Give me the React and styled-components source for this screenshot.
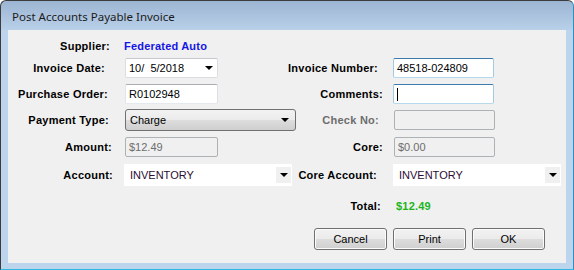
import React from 'react';
import styled, { createGlobalStyle } from 'styled-components';

const Global = createGlobalStyle`
    html, body {
        margin: 0;
        padding: 0;
        background: #ffffff;
    }
    * {
        box-sizing: border-box;
    }
`;

const Window = styled.div`
    width: 574px;
    height: 270px;
    border: 1px solid #3c3c3c;
    border-right-color: #2a8fc4;
    border-bottom-color: #2fb8de;
    border-radius: 6px 6px 0 0;
    background: linear-gradient(to bottom, #9cb5d2 0px, #b9d0e9 29px, #bcd4ec 29px, #bcd4ec 100%);
    display: flex;
    flex-direction: column;
    padding: 0 7px 6px 7px;
    overflow: hidden;
`;

const TitleBar = styled.div`
    height: 29px;
    display: flex;
    align-items: center;
    padding: 2px 0 0 4px;
    font-family: "Noto Sans", "Open Sans", sans-serif;
    font-size: 11.5px;
    color: #1b1b1b;
`;

const Client = styled.div`
    flex: 1;
    background: #f0f0f0;
    padding-top: 5px;
    font-family: "Liberation Sans", Arial, sans-serif;
    font-size: 11px;
    color: #000000;
`;

// label | field | label | field
const Form = styled.div`
    display: grid;
    grid-template-columns: 116px 164px 105px 168px;
    grid-template-rows: 21px 24px 28px 23px 31px 25px 38px;
    align-items: center;
`;

const Label = styled.div`
    text-align: right;
    font-weight: 700;
    letter-spacing: 0.25px;
    padding-right: ${p => p.$pad}px;
    color: ${p => (p.$disabled ? '#6d6d6d' : '#000000')};
    white-space: nowrap;
`;

const SupplierName = styled.div`
    font-weight: 700;
    letter-spacing: 0.2px;
    color: #1515e6;
    white-space: nowrap;
`;

const TotalValue = styled.div`
    font-weight: 700;
    letter-spacing: 0.2px;
    color: #1db51d;
    padding-left: 3px;
`;

const TextBox = styled.div`
    width: ${p => p.$w}px;
    height: 20px;
    margin-left: ${p => p.$ml || 0}px;
    display: flex;
    align-items: center;
    padding-left: 3px;
    background: ${p => (p.$disabled ? '#f0f0f0' : '#ffffff')};
    color: ${p => (p.$disabled ? '#6d6d6d' : '#000000')};
    border: 1px solid;
    border-radius: 2px;
    border-color: ${p =>
        p.$disabled
            ? '#adb2b5'
            : p.$focus
            ? '#3d7bad #a4c9e3 #b7d9ed #a4c9e3'
            : '#abadb3 #dbdfe6 #e3e9ef #e2e3ea'};
`;

const Caret = styled.span`
    width: 1px;
    height: 13px;
    background: #000000;
`;

const Arrow = styled.span`
    width: 0;
    height: 0;
    border-left: 4px solid transparent;
    border-right: 4px solid transparent;
    border-top: 4px solid #000000;
`;

const DatePicker = styled(TextBox)`
    justify-content: space-between;
    padding-right: 4px;
    border-color: #c5c7cc #dcdde0 #dcdde0 #dcdde0;
`;

const DropList = styled.div`
    width: ${p => p.$w}px;
    height: 22px;
    margin-left: 1px;
    display: flex;
    align-items: center;
    justify-content: space-between;
    padding: 0 6px 0 4px;
    border: 1px solid #707070;
    border-radius: 3px;
    background: linear-gradient(to bottom, #f2f2f2 0%, #ebebeb 50%, #dddddd 50%, #cfcfcf 100%);
`;

const FlatCombo = styled.div`
    width: ${p => p.$w}px;
    height: 22px;
    display: flex;
    align-items: center;
    justify-content: space-between;
    padding: 0 1px 0 6px;
    background: #ffffff;
    color: #2c0c34;
`;

const ComboButton = styled.span`
    width: 15px;
    height: 16px;
    display: flex;
    align-items: center;
    justify-content: center;
    background: #f0f0f0;
`;

const ButtonRow = styled.div`
    display: flex;
    justify-content: flex-end;
    gap: 6px;
    margin-top: 3px;
    padding-right: 21px;
`;

const Button = styled.button`
    width: 73px;
    height: 22px;
    padding: 0;
    font-family: "Liberation Sans", Arial, sans-serif;
    font-size: 11px;
    color: #000000;
    border: 1px solid #707070;
    border-radius: 3px;
    background: linear-gradient(to bottom, #f2f2f2 0%, #ebebeb 50%, #dddddd 50%, #cfcfcf 100%);
    box-shadow: inset 0 0 0 1px #fcfcfc;
`;

const App = () => (
    <Window>
        <Global />
        <TitleBar>Post Accounts Payable Invoice</TitleBar>
        <Client>
            <Form>
                {/* row 1 */}
                <Label $pad={14}>Supplier:</Label>
                <SupplierName>Federated Auto</SupplierName>
                <div />
                <div />

                {/* row 2 */}
                <Label $pad={19}>Invoice Date:</Label>
                <DatePicker $w={93} $ml={1}>
                    <span>10/&nbsp; 5/2018</span>
                    <Arrow />
                </DatePicker>
                <Label $pad={15}>Invoice Number:</Label>
                <TextBox $w={101} $focus>48518-024809</TextBox>

                {/* row 3 */}
                <Label $pad={16}>Purchase Order:</Label>
                <TextBox $w={93} $ml={1}>R0102948</TextBox>
                <Label $pad={10}>Comments:</Label>
                <TextBox $w={101} $focus><Caret /></TextBox>

                {/* row 4 */}
                <Label $pad={15}>Payment Type:</Label>
                <DropList $w={171}>
                    <span>Charge</span>
                    <Arrow />
                </DropList>
                <Label $pad={14} $disabled>Check No:</Label>
                <TextBox $w={101} $ml={1} $disabled />

                {/* row 5 */}
                <Label $pad={12}>Amount:</Label>
                <TextBox $w={93} $ml={1} $disabled>$12.49</TextBox>
                <Label $pad={10}>Core:</Label>
                <TextBox $w={101} $ml={1} $disabled>$0.00</TextBox>

                {/* row 6 */}
                <Label $pad={11}>Account:</Label>
                <FlatCombo $w={168}>
                    <span>INVENTORY</span>
                    <ComboButton><Arrow /></ComboButton>
                </FlatCombo>
                <Label $pad={16}>Core Account:</Label>
                <FlatCombo $w={168}>
                    <span>INVENTORY</span>
                    <ComboButton><Arrow /></ComboButton>
                </FlatCombo>

                {/* total */}
                <div />
                <div />
                <Label $pad={12}>Total:</Label>
                <TotalValue>$12.49</TotalValue>
            </Form>
            <ButtonRow>
                <Button>Cancel</Button>
                <Button>Print</Button>
                <Button>OK</Button>
            </ButtonRow>
        </Client>
    </Window>
);

export default App;
